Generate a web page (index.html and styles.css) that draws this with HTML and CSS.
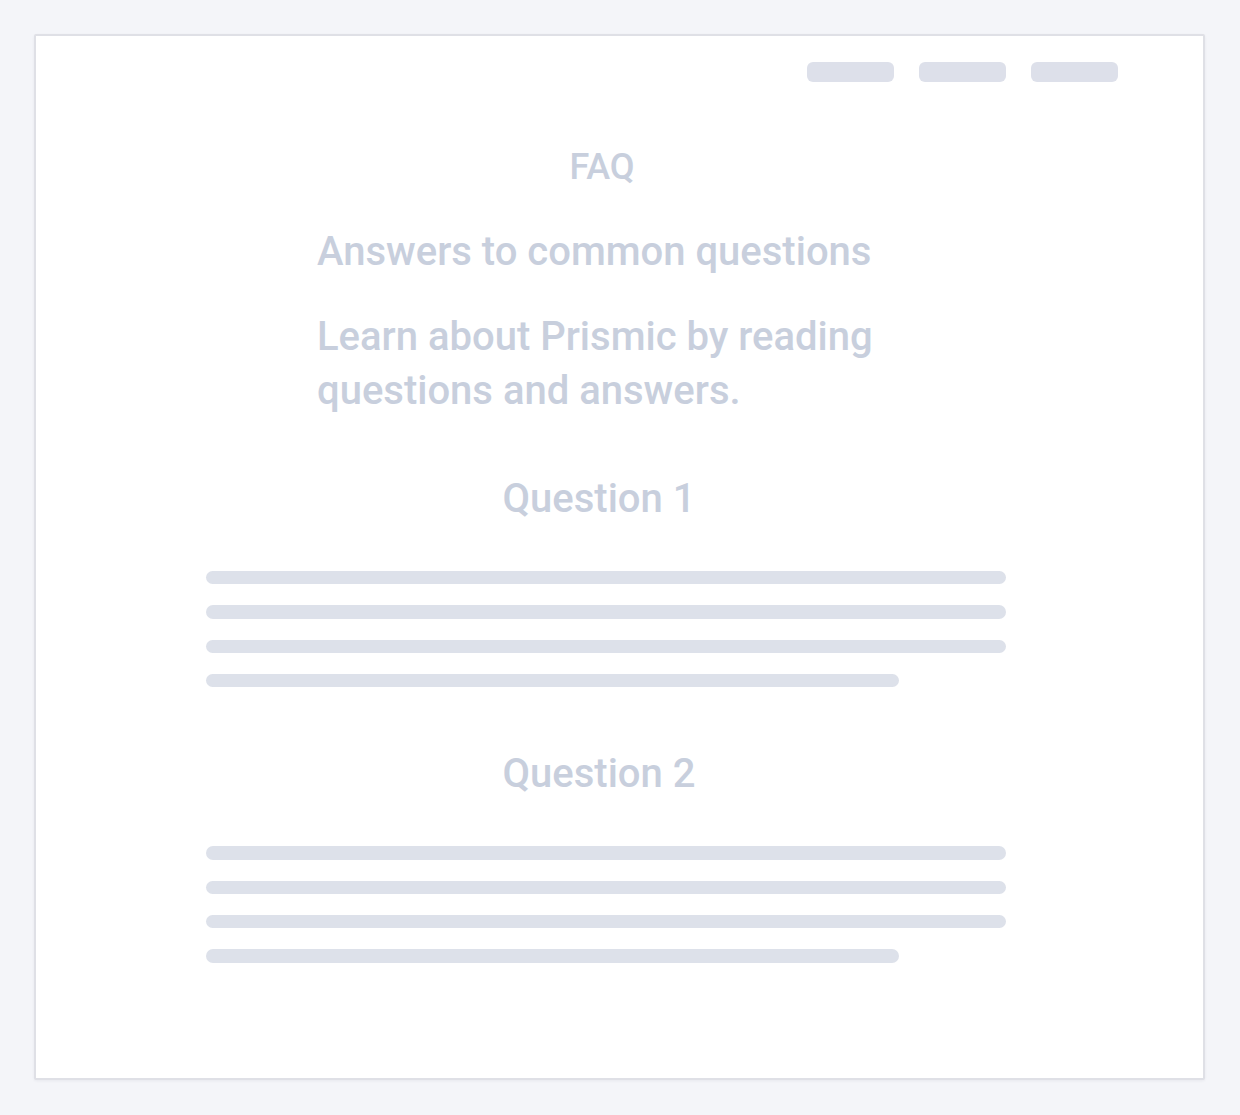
FILE: index.html
```html
<!DOCTYPE html>
<html lang="en">
<head>
  <meta charset="UTF-8">
  <title>FAQ</title>
  <link rel="stylesheet" href="styles.css">
</head>
<body>
  <div class="card">
    <div class="nav">
      <span class="pill"></span>
      <span class="pill"></span>
      <span class="pill"></span>
    </div>

    <div class="content">
      <div class="eyebrow">FAQ</div>
      <div class="intro">
        <h1>Answers to common questions</h1>
        <p>Learn about Prismic by reading questions and answers.</p>
      </div>

      <div class="question">
        <h2>Question 1</h2>
        <div class="answer">
          <span class="line"></span>
          <span class="line"></span>
          <span class="line"></span>
          <span class="line short"></span>
        </div>
      </div>

      <div class="question">
        <h2>Question 2</h2>
        <div class="answer">
          <span class="line"></span>
          <span class="line"></span>
          <span class="line"></span>
          <span class="line short"></span>
        </div>
      </div>
    </div>
  </div>
</body>
</html>
```

FILE: styles.css
```css
body {
  margin: 0;
  padding: 34px 35px 35px 34px;
  background-color: #f4f5f9;
  font-family: Roboto, "Liberation Sans", sans-serif;
  color: #c8cfdd;
}
.card {
  box-sizing: border-box;
  width: 1171px;
  height: 1046px;
  background-color: #fff;
  border: 2px solid #dfe0e6;
  border-radius: 2px;
  box-shadow: 0 1px 3px rgba(30, 40, 70, 0.06);
}
.nav {
  display: flex;
  justify-content: flex-end;
  gap: 25px;
  padding: 26px 85px 0 0;
}
.pill {
  width: 87px;
  height: 20px;
  border-radius: 6px;
  background-color: #dde0ea;
}
.content {
  width: 800px;
  margin-left: 170px;
  display: flex;
  flex-direction: column;
}
.eyebrow {
  margin-top: 64px;
  font-size: 36px;
  font-weight: 500;
  line-height: 1.2;
  text-align: center;
  margin-right: 8px;
}
.intro {
  width: 578px;
  margin: 39px auto 0;
}
h1 {
  margin: 0;
  font-size: 40px;
  font-weight: 500;
  line-height: 1.2;
}
.intro p {
  margin: 34px 0 0;
  font-size: 40px;
  font-weight: 500;
  line-height: 54px;
}
.question h2 {
  margin: 0;
  font-size: 40px;
  font-weight: 500;
  line-height: 1.2;
  text-align: center;
  margin-right: 14px;
}
.question { margin-top: 57px; }
.question + .question { margin-top: 63px; }
.answer {
  display: flex;
  flex-direction: column;
  gap: 21px;
  margin-top: 48px;
}
.line {
  height: 13.3px;
  border-radius: 7px;
  background-color: #dde1ea;
}
.line.short { width: 693px; }
```
